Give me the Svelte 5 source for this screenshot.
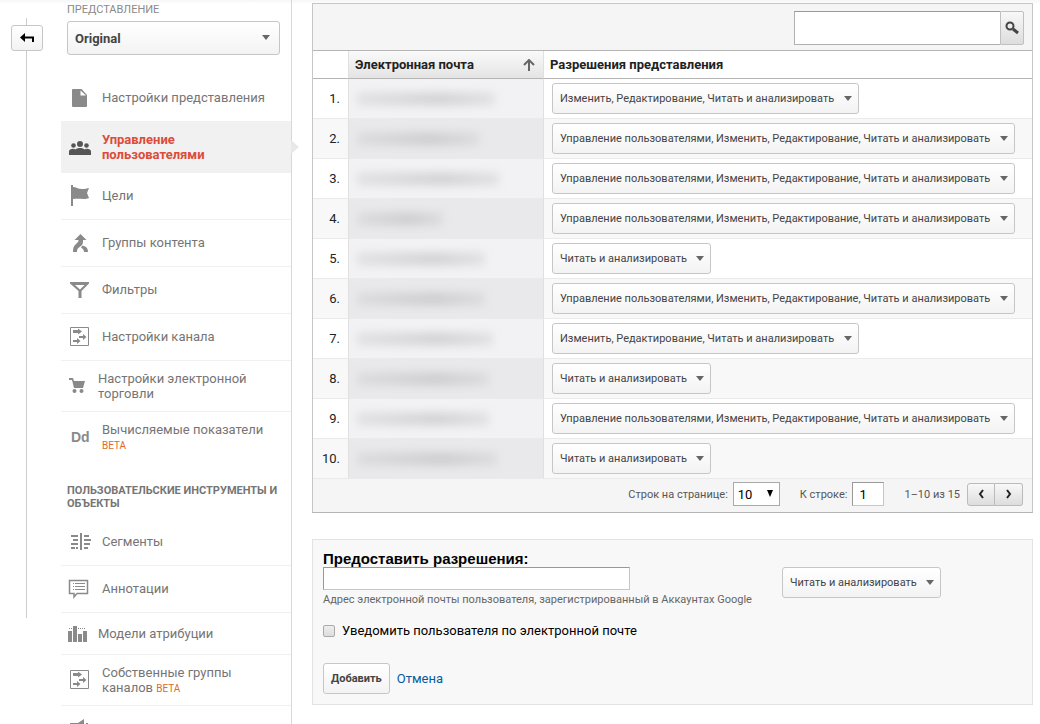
<script lang="ts">
  // ── Data ─────────────────────────────────────────────────────────────────────

  interface NavItem {
    icon: string;
    label: string;
    beta?: boolean;
    active?: boolean;
    variant?: 'compact' | 'narrow';
  }

  interface UserRow {
    id: number;
    mask: number;
    access: string;
  }

  const READ = 'Читать и анализировать';
  const EDIT = `Изменить, Редактирование, ${READ}`;
  const FULL = `Управление пользователями, ${EDIT}`;

  const viewItems: NavItem[] = [
    { icon: 'file', label: 'Настройки представления' },
    { icon: 'people', label: 'Управление пользователями', active: true },
    { icon: 'flag', label: 'Цели' },
    { icon: 'merge', label: 'Группы контента' },
    { icon: 'filter', label: 'Фильтры' },
    { icon: 'channel', label: 'Настройки канала' },
    { icon: 'cart', label: 'Настройки электронной торговли', variant: 'narrow' },
    { icon: 'dd', label: 'Вычисляемые показатели', beta: true },
  ];

  const toolItems: NavItem[] = [
    { icon: 'segments', label: 'Сегменты' },
    { icon: 'note', label: 'Аннотации' },
    { icon: 'bars', label: 'Модели атрибуции', variant: 'compact' },
    { icon: 'channel', label: 'Собственные группы каналов', beta: true },
    { icon: 'horn', label: '' },
  ];

  const rows: UserRow[] = [
    { id: 1, mask: 138, access: EDIT },
    { id: 2, mask: 122, access: FULL },
    { id: 3, mask: 142, access: FULL },
    { id: 4, mask: 86, access: FULL },
    { id: 5, mask: 128, access: READ },
    { id: 6, mask: 128, access: FULL },
    { id: 7, mask: 136, access: EDIT },
    { id: 8, mask: 132, access: READ },
    { id: 9, mask: 132, access: FULL },
    { id: 10, mask: 140, access: READ },
  ];

  let query = $state('');
  let email = $state('');
  let startRow = $state('1');
  let notify = $state(false);
</script>

{#snippet navIcon(name: string)}
  <svg class="nav-icon" width="22" height="22" viewBox="0 0 22 22" fill="currentColor" aria-hidden="true">
    {#if name === 'file'}
      <path d="M4 2h8.5L18 8v11a1 1 0 0 1-1 1H4a1 1 0 0 1-1-1V3a1 1 0 0 1 1-1z" />
      <path d="M11.500 3.500v5H17z" fill="#fff" />
    {:else if name === 'people'}
      <circle cx="11" cy="8" r="3" />
      <circle cx="4.500" cy="9.500" r="2.300" />
      <circle cx="17.500" cy="9.500" r="2.300" />
      <path d="M0 19v-3.500c0-2.500 4.500-3.500 6.500-2C8 11.500 14 11.500 15.500 13.500c2-1.500 6.500-.5 6.500 2V19z" />
    {:else if name === 'flag'}
      <path d="M2 0h2v2c3 0 5 2 9 2c3 0 5-.5 7-1l-2 5 2 5c-5 2-9 0-16 1v7H2z" />
    {:else if name === 'merge'}
      <path d="M11.500 2l6 6H14c0 3 0 4-1.500 5.500L10 15.500c-1.500 1-2 2-2 4.500H4c0-5 1-6 3-8s2.500-2 2.500-4H5.500z" />
      <path d="M13.500 13.500c4 1 5.500 3 5.500 6.500h-4c0-2-1-3-3-4.500z" />
    {:else if name === 'filter'}
      <path fill-rule="evenodd" d="M1 3h19v1.500L12.500 12v7h-3v-7L1 4.500zM6 6l5 4.500L15.500 6z" />
    {:else if name === 'channel'}
      <path d="M1.500 1.500h18v18h-18z" fill="none" stroke="currentColor" />
      <path d="M4 4h5V2.500L13 5.500 9 8.500V7H4zM10 10h4V8l3.500 3-3.500 3v-2h-4zM4 14h4v-2l3.500 3L8 18v-2H4z" />
    {:else if name === 'cart'}
      <path d="M0 3h4l1 3h11l-2 7H5L3 5H0z" />
      <circle cx="5.500" cy="16" r="2" />
      <circle cx="12.500" cy="16" r="2" />
    {:else if name === 'dd'}
      <text x="2" y="16" font-family="Liberation Sans, Arial, sans-serif" font-size="14" font-weight="700">Dd</text>
    {:else if name === 'segments'}
      <path d="M11 2h2v17h-2zM2 4h7v2H2zM4 8h5v2H4zM2 12h7v2H2zM2 16h4v2H2zM7 16h2v2H7zM15 4h5v2h-5zM15 8h7v2h-7zM15 12h6v2h-6zM15 16h4v2h-4z" />
    {:else if name === 'note'}
      <path d="M.5 2.500h18v13H8L5 19v-3.500H.5z" fill="none" stroke="currentColor" stroke-width="1.500" />
      <path d="M4 5h1v1H4zM6 5h10v1H6zM4 8h1v1H4zM6 8h10v1H6zM4 11h1v1H4zM6 11h10v1H6z" />
    {:else if name === 'bars'}
      <path d="M-1 8h4v11h-4zM4 3h4v16H4zM9 11h4v8H9zM14 8h4v11h-4z" />
      <path d="M0 5.500h4M9 5.500h8" stroke="currentColor" stroke-dasharray="1 1" />
    {:else if name === 'horn'}
      <path d="M1 5h8l6-4v15l-6-4H1zM17 5h2v5h-2z" />
    {/if}
  </svg>
{/snippet}

{#snippet navList(items: NavItem[])}
  <ul class="nav-list">
    {#each items as item}
      <li>
        <a
          class="nav-item {item.variant ?? ''}"
          class:active={item.active}
          href="#{item.icon}"
          aria-current={item.active ? 'page' : undefined}
        >
          {@render navIcon(item.icon)}
          <span class="nav-label">{item.label}{#if item.beta}{' '}<span class="beta">BETA</span>{/if}</span>
        </a>
      </li>
    {/each}
  </ul>
{/snippet}

{#snippet dropdown(value: string, label: string)}
  <span class="dropdown">
    <select aria-label={label}>
      <option>{value}</option>
    </select>
  </span>
{/snippet}

<div class="page">
  <!-- ── Back rail ── -->
  <div class="rail">
    <button class="back" aria-label="Назад">
      <svg width="16" height="12" viewBox="0 0 16 12" aria-hidden="true">
        <path d="M1 5.500L6 1v3.500h9V10h-2V6.500H6V10z" />
      </svg>
    </button>
  </div>

  <!-- ── Sidebar ── -->
  <nav class="sidebar">
    <div class="view-picker">
      <label for="view">ПРЕДСТАВЛЕНИЕ</label>
      <span class="dropdown">
        <select id="view">
          <option>Original</option>
        </select>
      </span>
    </div>
    {@render navList(viewItems)}
    <h2 class="nav-heading">ПОЛЬЗОВАТЕЛЬСКИЕ ИНСТРУМЕНТЫ И ОБЪЕКТЫ</h2>
    {@render navList(toolItems)}
  </nav>

  <main>
    <!-- ── Users ── -->
    <section class="users">
      <div class="toolbar">
        <input type="text" aria-label="Поиск" bind:value={query} />
        <button class="search" aria-label="Найти">
          <svg width="14" height="14" viewBox="0 0 14 14" fill="none" stroke="#444" aria-hidden="true">
            <circle cx="5" cy="5" r="3.500" stroke-width="2" />
            <path d="M8 8l5 4" stroke-width="3" />
          </svg>
        </button>
      </div>

      <table>
        <thead>
          <tr>
            <th class="num"></th>
            <th class="email" aria-sort="ascending">
              <span class="sort">
                Электронная почта
                <svg width="12" height="12" viewBox="0 0 12 12" fill="none" stroke="#666" stroke-width="2" aria-hidden="true">
                  <path d="M6 12V2M1 6l5-5 5 5" />
                </svg>
              </span>
            </th>
            <th class="access">Разрешения представления</th>
          </tr>
        </thead>
        <tbody>
          {#each rows as row (row.id)}
            <tr>
              <td class="num">{row.id}.</td>
              <td class="email"><span class="mask" style="width: {row.mask}px"></span></td>
              <td class="access">{@render dropdown(row.access, `Разрешения ${row.id}`)}</td>
            </tr>
          {/each}
        </tbody>
      </table>

      <div class="pager">
        <label for="page-size">Строк на странице:</label>
        <span class="page-size">
          <select id="page-size">
            <option>10</option>
          </select>
        </span>
        <label class="goto" for="start-row">К строке:</label>
        <input id="start-row" type="text" bind:value={startRow} />
        <span class="range">1–10 из 15</span>
        <span class="steps">
          <button aria-label="Предыдущая страница">
            <svg width="8" height="10" viewBox="0 0 8 10" aria-hidden="true"><path d="M6 1L3 5l3 4" /></svg>
          </button>
          <button aria-label="Следующая страница">
            <svg width="8" height="10" viewBox="0 0 8 10" aria-hidden="true"><path d="M2 1l3 4-3 4" /></svg>
          </button>
        </span>
      </div>
    </section>

    <!-- ── Grant access ── -->
    <form class="grant" onsubmit={(e) => e.preventDefault()}>
      <div class="grant-fields">
        <div>
          <label class="grant-title" for="email">Предоставить разрешения:</label>
          <input id="email" class="grant-email" type="text" bind:value={email} />
          <p class="hint">Адрес электронной почты пользователя, зарегистрированный в Аккаунтах Google</p>
        </div>
        <div class="grant-access">{@render dropdown(READ, 'Разрешения')}</div>
      </div>
      <label class="notify">
        <input type="checkbox" bind:checked={notify} />
        Уведомить пользователя по электронной почте
      </label>
      <div class="actions">
        <button class="submit">Добавить</button>
        <a href="#cancel">Отмена</a>
      </div>
    </form>
  </main>
</div>

<style>
  :global(body) {
    background: #fff;
  }

  .page {
    display: flex;
    height: 100vh;
    overflow: hidden;
    color: #222;
    font: 13px/15px Roboto, Arial, sans-serif;
    background: linear-gradient(#f6f6f6, #fff 4px);
  }

  .page * {
    box-sizing: border-box;
  }

  button,
  input,
  select {
    margin: 0;
    font-family: inherit;
    color: #444;
  }

  /* ── Back rail ── */

  .rail {
    flex: none;
    width: 32px;
    height: 600px;
    margin: 18px 18px 0 11px;
    padding-top: 7px;
    background: linear-gradient(#ccc, #ccc) 15px 0 / 1px 100% no-repeat;
  }

  .back {
    display: flex;
    align-items: center;
    justify-content: center;
    width: 32px;
    height: 26px;
    padding: 0;
    border: 1px solid #c6c6c6;
    border-radius: 3px;
    background: linear-gradient(#fff, #f3f3f3);
  }

  /* ── Sidebar ── */

  .sidebar {
    flex: none;
    width: 231px;
    min-height: 100vh;
    border-right: 1px solid #d8d8d8;
  }

  .view-picker {
    display: flex;
    flex-direction: column;
    padding: 2px 11px 20px 6px;
  }

  .view-picker label {
    margin-bottom: 4px;
    color: #8a8a8a;
    font-size: 11px;
  }

  .nav-list {
    margin: 0;
    padding: 0;
    list-style: none;
  }

  .nav-item {
    position: relative;
    display: flex;
    align-items: center;
    gap: 11px;
    min-height: 47px;
    padding: 10px 22px 10px 8px;
    border-bottom: 1px solid #f0f0f0;
    color: #757575;
    text-decoration: none;
  }

  .nav-list li:last-child .nav-item {
    border-bottom-color: transparent;
  }

  .nav-item.compact {
    min-height: 42px;
    padding-top: 9px;
    padding-bottom: 9px;
  }

  .nav-item.compact,
  .nav-item.narrow {
    gap: 7px;
  }

  .nav-item.active {
    background: #f1f1f1;
    color: #dd4b39;
    font-weight: 700;
  }

  .nav-item.active::after {
    content: '';
    position: absolute;
    top: 18px;
    right: -8px;
    width: 8px;
    height: 14px;
    background: #e8e8e8;
    clip-path: polygon(0 0, 100% 50%, 0 100%);
  }

  .nav-icon {
    flex: none;
    overflow: visible;
    color: #8a8a8a;
  }

  .active .nav-icon {
    color: #555;
  }

  .nav-label {
    flex: 1;
    min-height: 16px;
  }

  .beta {
    color: #dd6b2a;
    font-size: 10px;
    line-height: 10px;
  }

  .nav-heading {
    margin: 0;
    padding: 21px 6px 9px;
    color: #757575;
    font-size: 11px;
    font-weight: 700;
    line-height: 13px;
  }

  /* ── Dropdown ── */

  .dropdown {
    position: relative;
    display: inline-block;
    vertical-align: top;
  }

  .dropdown select {
    appearance: none;
    height: 31px;
    padding: 0 23px 0 7px;
    border: 1px solid #c6c6c6;
    border-radius: 3px;
    background: linear-gradient(#fff, #f3f3f3);
    font-size: 11px;
  }

  .view-picker .dropdown select {
    width: 100%;
    height: 34px;
    font-size: 13px;
    font-weight: 700;
  }

  .dropdown::after {
    content: '';
    position: absolute;
    top: 50%;
    right: 7px;
    margin-top: -3px;
    border: 4px solid transparent;
    border-top: 5px solid #666;
    border-bottom: 0;
    pointer-events: none;
  }

  .view-picker .dropdown::after {
    right: 10px;
  }

  /* ── Users table ── */

  main {
    flex: 1;
    min-width: 0;
    padding: 3px 7px 0 20px;
  }

  .users {
    border: 1px solid #c6c6c6;
    border-bottom-color: #b5b5b5;
    background: #f5f5f5;
  }

  .toolbar {
    display: flex;
    justify-content: flex-end;
    padding: 7px 8px 5px;
    border-bottom: 1px solid #b5b5b5;
  }

  .toolbar input {
    width: 206px;
    height: 34px;
    border: 1px solid #b0b0b0;
    border-top-color: #999;
    border-right: 0;
    background: #fff;
  }

  .search {
    display: flex;
    align-items: center;
    justify-content: center;
    width: 24px;
    height: 34px;
    padding: 0;
    border: 1px solid #c0c0c0;
    border-radius: 0 2px 2px 0;
    background: linear-gradient(#f8f8f8, #ddd);
  }

  table {
    width: 100%;
    border-spacing: 0;
    background: #fff;
  }

  th {
    height: 28px;
    padding: 0 8px 0 6px;
    border-bottom: 1px solid #b5b5b5;
    text-align: left;
  }

  td {
    height: 40px;
    padding: 0 8px;
    border-bottom: 1px solid #eaeaea;
  }

  .num {
    width: 36px;
    border-right: 1px solid #e0e0e0;
    text-align: right;
  }

  .email {
    width: 195px;
    border-right: 1px solid #e0e0e0;
  }

  th.email {
    background: linear-gradient(#fafafa, #e4e4e4);
  }

  .sort {
    display: flex;
    align-items: center;
    justify-content: space-between;
  }

  td.email {
    background: #f2f2f4;
  }

  tr:nth-child(even) td {
    background: #f8f8f8;
  }

  tr:nth-child(even) td.email {
    background: #e9e9eb;
  }

  .mask {
    display: block;
    height: 14px;
    background: linear-gradient(90deg, #ccc, #aaa 60%, #ccc);
    filter: blur(4px);
    opacity: 0.4;
  }

  /* ── Pager ── */

  .pager {
    display: flex;
    align-items: center;
    justify-content: flex-end;
    padding: 3px 9px 6px;
    color: #555;
    font-size: 11px;
  }

  .page-size {
    position: relative;
    margin-left: 5px;
  }

  .page-size select {
    display: block;
    appearance: none;
    width: 47px;
    height: 24px;
    padding: 0 4px;
    border: 1px solid #a9a9a9;
    border-radius: 0;
    background: #fff;
    color: #000;
    font-size: 13px;
  }

  .page-size::after {
    content: '';
    position: absolute;
    top: 8px;
    right: 7px;
    border: 3px solid transparent;
    border-top: 7px solid #000;
    border-bottom: 0;
    pointer-events: none;
  }

  .goto {
    margin: 0 5px 0 20px;
  }

  .pager input {
    width: 32px;
    height: 24px;
    padding: 0 6px;
    border: 1px solid #c6c6c6;
    border-top-color: #999;
    border-left-color: #999;
    background: #fff;
    color: #000;
    font-size: 13px;
  }

  .range {
    margin: 0 7px 0 20px;
  }

  .steps {
    display: flex;
  }

  .steps button {
    display: flex;
    align-items: center;
    justify-content: center;
    width: 28px;
    height: 23px;
    padding: 0;
    border: 1px solid #bbb;
    border-radius: 3px 0 0 3px;
    background: linear-gradient(#f8f8f8, #ddd);
  }

  .steps button + button {
    border-left: 0;
    border-radius: 0 3px 3px 0;
  }

  .steps path {
    fill: none;
    stroke: #222;
    stroke-width: 2;
  }

  /* ── Grant form ── */

  .grant {
    margin-top: 26px;
    padding: 10px;
    border: 1px solid #e3e3e3;
    background: #f8f8f8;
    color: #000;
  }

  .grant-fields {
    display: flex;
    gap: 30px;
  }

  .grant-title {
    display: block;
    font: bold 15px/17px 'Liberation Sans', Arial, sans-serif;
  }

  .grant-email {
    display: block;
    width: 307px;
    height: 23px;
    border: 1px solid #c6c6c6;
    border-top-color: #999;
    border-left-color: #999;
    background: #fff;
  }

  .grant-access {
    padding-top: 17px;
  }

  .hint {
    margin: 2px 0 15px;
    color: #666;
    font-size: 11px;
    line-height: 16px;
  }

  .notify {
    display: flex;
    align-items: center;
    gap: 7px;
    line-height: 16px;
  }

  .notify input {
    appearance: none;
    width: 12px;
    height: 12px;
    border: 1px solid #aaa;
    border-radius: 2px;
    background: linear-gradient(#eee, #ddd);
  }

  .actions {
    display: flex;
    align-items: center;
    gap: 7px;
    margin-top: 24px;
  }

  .submit {
    height: 31px;
    padding: 0 7px;
    border: 1px solid #c6c6c6;
    border-radius: 3px;
    background: linear-gradient(#fff, #f3f3f3);
    font-size: 11px;
    font-weight: 700;
  }

  .actions a {
    color: #0b5a9d;
    text-decoration: none;
  }
</style>
